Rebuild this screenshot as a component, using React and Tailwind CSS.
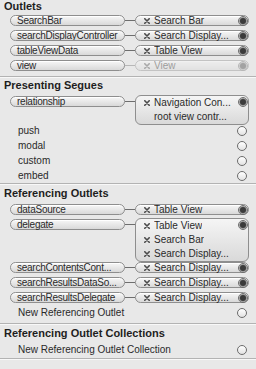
import React from "react";

const pill =
  "rounded-full border border-[#8e8e8e] bg-gradient-to-b from-[#f7f7f7] to-[#d9d9d9] shadow-[inset_0_1px_0_#ffffff]";

function XMark() {
  return (
    <svg width="6" height="6" viewBox="0 0 6 6" className="shrink-0">
      <path d="M0.8 0.8 L5.2 5.2 M5.2 0.8 L0.8 5.2" stroke="#4a4a4a" strokeWidth="1.6" strokeLinecap="round" />
    </svg>
  );
}

function Port({ filled }) {
  return (
    <div className="flex h-[10px] w-[10px] shrink-0 items-center justify-center rounded-full border border-[#6c6c6c] bg-gradient-to-b from-[#ffffff] to-[#e2e2e2]">
      {filled && <div className="h-[6px] w-[6px] rounded-full bg-[#3b3b3b] ring-1 ring-[#9a9a9a]" />}
    </div>
  );
}

function Target({ label }) {
  return (
    <div className="flex h-[14px] items-center">
      <div className="ml-[8px] w-[10px]">
        <XMark />
      </div>
      <span className="truncate">{label}</span>
    </div>
  );
}

function Row({ name, targets, faded }) {
  if (targets.length === 1) {
    return (
      <div className="flex h-[15px] items-center">
        <div className={`ml-[10px] flex h-[11px] w-[115px] items-center overflow-hidden whitespace-nowrap pl-[6px] tracking-[-0.25px] ${pill}`}>{name}</div>
        <div className={`h-px w-[10px] bg-[#6e6e6e] ${faded ? "opacity-40" : ""}`} />
        <div className={`flex h-[11px] w-[114px] items-center ${pill} ${faded ? "opacity-40" : ""}`}>
          <div className="ml-[8px] w-[10px]">
            <XMark />
          </div>
          <span className="flex-1 truncate">{targets[0]}</span>
          <Port filled />
        </div>
      </div>
    );
  }
  return (
    <div className="flex items-start" style={{ height: targets.length * 14 + 1 }}>
      <div className={`ml-[10px] mt-[2px] flex h-[11px] w-[115px] items-center pl-[6px] tracking-[-0.25px] ${pill}`}>{name}</div>
      <div className="mt-[7px] h-px w-[10px] bg-[#6e6e6e]" />
      <div className="relative mt-[1px] w-[114px] rounded-[6px] border border-[#8e8e8e] bg-gradient-to-b from-[#f5f5f5] to-[#d9d9d9]">
        {targets.map((t, i) =>
          t.startsWith("~") ? (
            <div key={i} className="flex h-[14px] items-center pl-[18px]">
              <span className="truncate">{t.slice(1)}</span>
            </div>
          ) : (
            <Target key={i} label={t} />
          )
        )}
        <div className="absolute right-0 top-[1px]">
          <Port filled />
        </div>
      </div>
    </div>
  );
}

function Plain({ label }) {
  return (
    <div className="flex h-[15px] items-center justify-between pl-[18px] pr-[9px]">
      <span>{label}</span>
      <Port />
    </div>
  );
}

function Header({ children, h }) {
  return (
    <div className="flex items-center pl-[4px] text-[11px] font-bold text-[#1e1e1e]" style={{ height: h }}>
      {children}
    </div>
  );
}

function Sep() {
  return <div className="h-px bg-[#b3b3b3] shadow-[0_1px_0_#f8f8f8]" />;
}

export default function App() {
  return (
    <div className="h-[369px] w-[256px] overflow-hidden bg-[#e8e8e8] font-['Liberation_Sans',Arial,sans-serif] text-[10px] leading-none text-[#2a2a2a]">
      <Header h={13}>Outlets</Header>
      <Row name="SearchBar" targets={["Search Bar"]} />
      <Row name="searchDisplayController" targets={["Search Display..."]} />
      <Row name="tableViewData" targets={["Table View"]} />
      <Row name="view" targets={["View"]} faded />
      <div className="h-[3px]" />
      <Sep />

      <Header h={17}>Presenting Segues</Header>
      <Row name="relationship" targets={["Navigation Con...", "~root view contr..."]} />
      <Plain label="push" />
      <Plain label="modal" />
      <Plain label="custom" />
      <Plain label="embed" />
      <Sep />

      <Header h={18}>Referencing Outlets</Header>
      <Row name="dataSource" targets={["Table View"]} />
      <Row name="delegate" targets={["Table View", "Search Bar", "Search Display..."]} />
      <Row name="searchContentsCont..." targets={["Search Display..."]} />
      <Row name="searchResultsDataSo..." targets={["Search Display..."]} />
      <Row name="searchResultsDelegate" targets={["Search Display..."]} />
      <Plain label="New Referencing Outlet" />
      <div className="h-[3px]" />
      <Sep />

      <Header h={18}>Referencing Outlet Collections</Header>
      <Plain label="New Referencing Outlet Collection" />
      <div className="h-[1px]" />
      <Sep />
    </div>
  );
}
